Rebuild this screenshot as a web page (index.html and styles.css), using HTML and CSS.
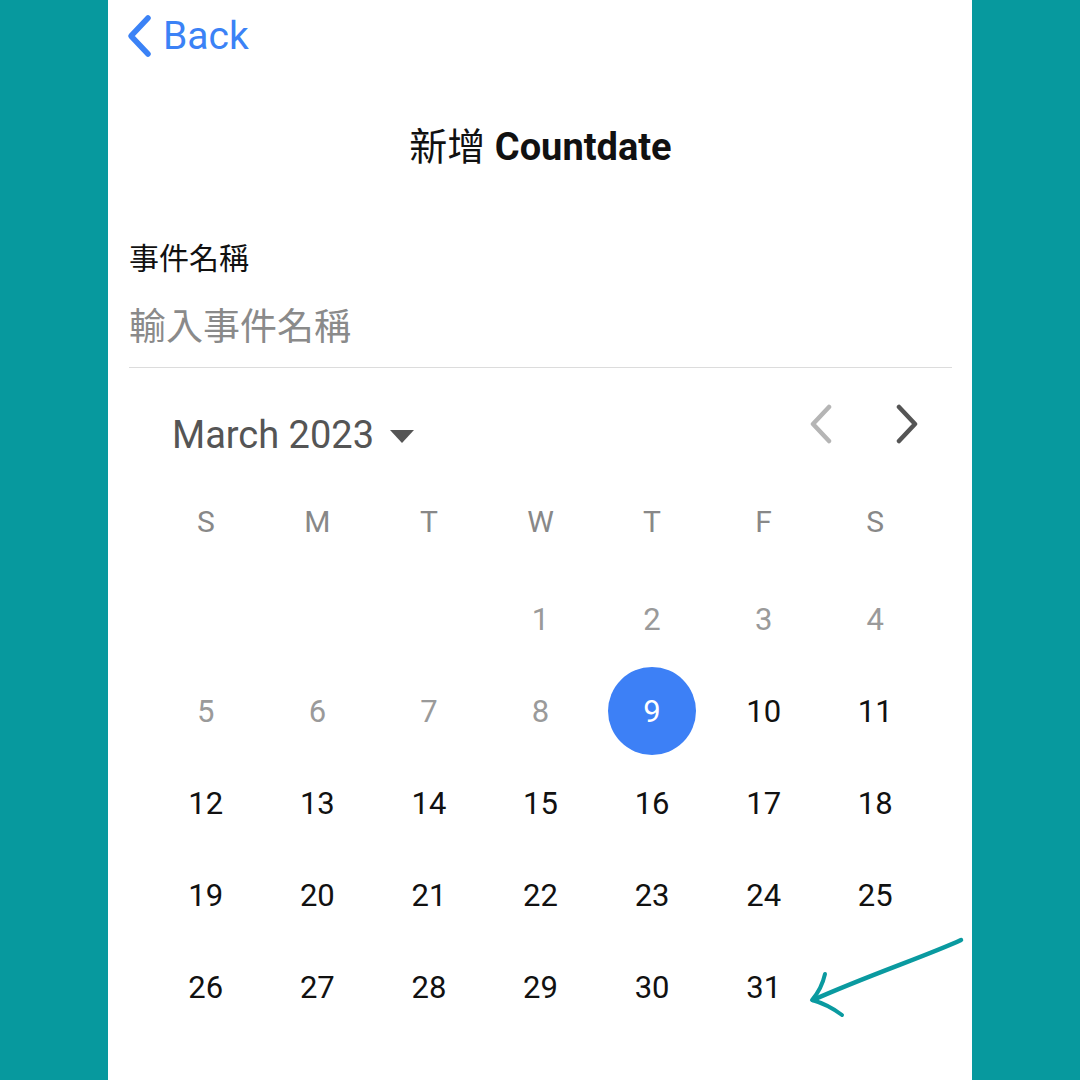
FILE: index.html
```html
<!DOCTYPE html>
<html>

<head lang="zh-Hant">
    <meta charset="UTF-8">
    <meta name="viewport" content="width=device-width, initial-scale=1.0">
    <title>新增 Countdate</title>
    <link rel="stylesheet" href="styles.css">
</head>

<body>
    <div class="panel">
        <div class="topbar">
            <a class="back" href="#">
                <svg class="back-icon" width="28" height="44" viewBox="0 0 28 44">
                    <path d="M23 4 L6 22 L23 40" fill="none" stroke="#3b82f6" stroke-width="5.5" stroke-linecap="round" stroke-linejoin="round"/>
                </svg>
                <span>Back</span>
            </a>
        </div>

        <h1 class="title">新增 <b>Countdate</b></h1>

        <div class="field">
            <label class="field-label">事件名稱</label>
            <div class="field-input">輸入事件名稱</div>
        </div>

        <div class="calendar">
            <div class="cal-head">
                <div class="month">
                    March 2023
                    <span class="caret"></span>
                </div>
                <div class="nav">
                    <svg width="30" height="40" viewBox="0 0 30 40">
                        <path d="M23 3 L7 20 L23 37" fill="none" stroke="#b5b5b5" stroke-width="4.5" stroke-linecap="round" stroke-linejoin="round"/>
                    </svg>
                    <svg width="30" height="40" viewBox="0 0 30 40">
                        <path d="M7 3 L23 20 L7 37" fill="none" stroke="#555" stroke-width="4.5" stroke-linecap="round" stroke-linejoin="round"/>
                    </svg>
                </div>
            </div>

            <div class="weekdays">
                <span>S</span><span>M</span><span>T</span><span>W</span><span>T</span><span>F</span><span>S</span>
            </div>

            <div class="days">
                <span></span><span></span><span></span>
                <span class="past">1</span><span class="past">2</span><span class="past">3</span><span class="past">4</span>
                <span class="past">5</span><span class="past">6</span><span class="past">7</span><span class="past">8</span>
                <span class="today">9</span><span>10</span><span>11</span>
                <span>12</span><span>13</span><span>14</span><span>15</span><span>16</span><span>17</span><span>18</span>
                <span>19</span><span>20</span><span>21</span><span>22</span><span>23</span><span>24</span><span>25</span>
                <span>26</span><span>27</span><span>28</span><span>29</span><span>30</span><span>31</span><span></span>
            </div>
        </div>

        <!-- 手绘箭头 -->
        <svg class="arrow" width="160" height="90" viewBox="0 0 160 90">
            <path d="M152 3 C120 18 60 38 4 63" fill="none" stroke="#0a9aa0" stroke-width="4.5" stroke-linecap="round"/>
            <path d="M16 37 C14 46 10 55 3 63 C14 66 25 72 33 78" fill="none" stroke="#0a9aa0" stroke-width="4" stroke-linecap="round" stroke-linejoin="round"/>
        </svg>
    </div>
</body>

</html>
```

FILE: styles.css
```css
* {
    margin: 0;
    padding: 0;
    box-sizing: border-box;
}

body {
    background-color: #07999e;
    font-family: Roboto, "Noto Sans CJK TC", sans-serif;
}

.panel {
    position: relative;
    width: 864px;
    height: 1080px;
    margin: 0 auto;
    padding: 0 20px 0 21px;
    background: #fff;
    overflow: hidden;
}

.topbar {
    height: 72px;
    display: flex;
    align-items: center;
}

.back {
    display: flex;
    align-items: center;
    gap: 10px;
    color: #3b82f6;
    text-decoration: none;
    font-size: 39px;
    margin-left: -4px;
}

.title {
    margin-top: 38px;
    height: 74px;
    line-height: 74px;
    text-align: center;
    font-size: 38px;
    font-weight: normal;
    color: #111;
}

.title b {
    font-weight: bold;
}

.field {
    margin-top: 55px;
}

.field-label {
    display: block;
    height: 40px;
    line-height: 40px;
    font-size: 30px;
    color: #111;
}

.field-input {
    margin-top: 24px;
    height: 65px;
    line-height: 50px;
    font-size: 37px;
    color: #8a8a8a;
    border-bottom: 1px solid #dcdcdc;
}

.calendar {
    padding: 0 21px;
}

.cal-head {
    margin-top: 37px;
    height: 60px;
    display: flex;
    align-items: center;
    justify-content: space-between;
}

.month {
    display: flex;
    align-items: center;
    gap: 16px;
    font-size: 38px;
    color: #555;
    padding-left: 22px;
}

.caret {
    width: 0;
    height: 0;
    border-left: 12px solid transparent;
    border-right: 12px solid transparent;
    border-top: 13px solid #555;
    margin-top: 2px;
}

.nav {
    display: flex;
    gap: 56px;
    margin-top: -22px;
    margin-right: 9px;
}

.weekdays,
.days {
    display: grid;
    grid-template-columns: repeat(7, 1fr);
}

.weekdays {
    margin-top: 11px;
    margin-bottom: 5px;
}

.weekdays span {
    height: 92px;
    line-height: 92px;
    text-align: center;
    font-size: 30px;
    color: #888;
}

.days span {
    height: 92px;
    display: flex;
    align-items: center;
    justify-content: center;
    font-size: 31px;
    color: #111;
}

.days span.past {
    color: #9a9a9a;
}

.days span.today {
    position: relative;
    color: #fff;
    z-index: 0;
}

.days span.today::after {
    content: "";
    position: absolute;
    left: 50%;
    top: 50%;
    width: 88px;
    height: 88px;
    margin: -44px 0 0 -44px;
    border-radius: 50%;
    background: #3d80f6;
    z-index: -1;
}

.arrow {
    position: absolute;
    left: 701px;
    top: 937px;
}
```
